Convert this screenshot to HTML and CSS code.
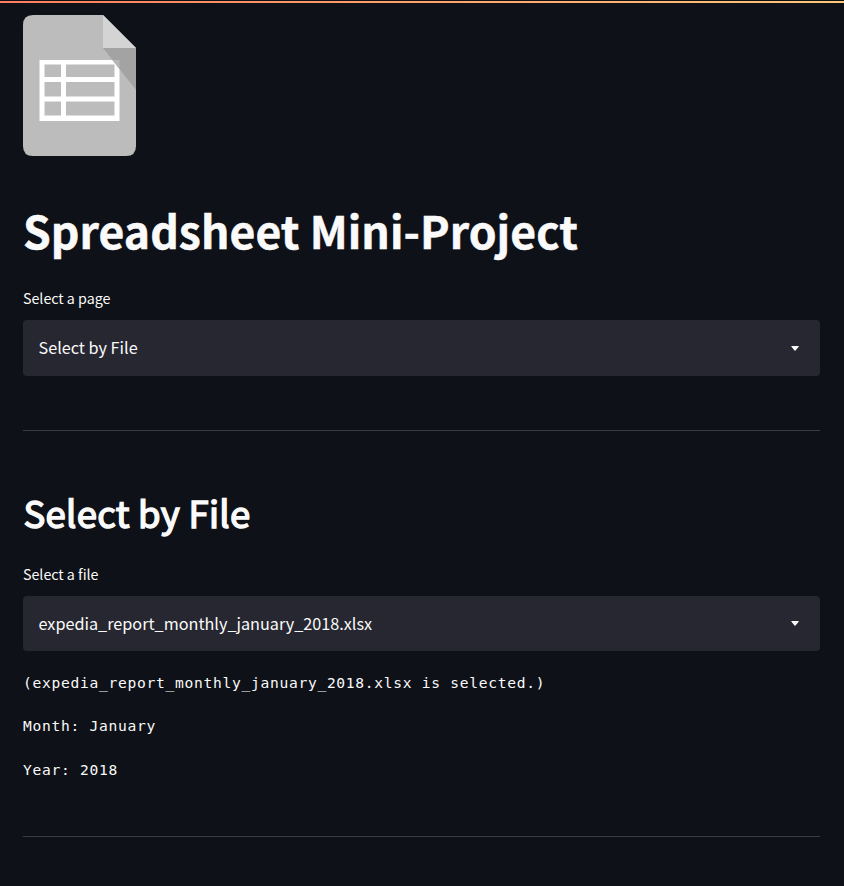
FILE: index.html
```html
<!DOCTYPE html>
<html lang="en">
<head>
<meta charset="utf-8">
<title>Spreadsheet Mini-Project</title>
<link rel="stylesheet" href="styles.css">
</head>
<body>
<div class="decoration"></div>
<main class="page">
  <svg class="logo" width="113" height="141" viewBox="0 0 113 141" aria-hidden="true">
    <path fill="#bcbcbc" d="M10 0H80L113 33V131Q113 141 103 141H10Q0 141 0 131V10Q0 0 10 0Z"/>
    <path fill="#fff" fill-rule="evenodd" d="M16.500 45H96.500V106H16.500ZM21.500 49.500V62H38V49.500ZM43 49.500V62H91.500V49.500ZM21.500 67V81.500H38V67ZM43 67V81.500H91.500V67ZM21.500 86.500V100.500H38V86.500ZM43 86.500V100.500H91.500V86.500Z"/>
    <path fill="#d5d4d5" d="M80 0L113 33H80Z"/>
    <path fill="#a3a3a3" d="M80 33H113V75Z"/>
    <path fill="#b5b5b5" d="M89.500 45H96.500V54Z"/>
  </svg>
  <h1 class="title">Spreadsheet Mini-Project</h1>
  <div class="field">
    <div class="label">Select a page</div>
    <div class="select">
      <span class="value">Select by File</span>
      <svg class="caret" width="8" height="5" viewBox="0 0 8 5"><path d="M.3.5Q0 .2.6 0H7.400Q8 .2 7.700.8L4.500 4.500Q4 5 3.500 4.500Z"/></svg>
    </div>
  </div>
  <hr class="rule">
  <h2 class="heading">Select by File</h2>
  <div class="field">
    <div class="label">Select a file</div>
    <div class="select select-file">
      <span class="value">expedia_report_monthly_january_2018.xlsx</span>
      <svg class="caret" width="8" height="5" viewBox="0 0 8 5"><path d="M.3.5Q0 .2.6 0H7.400Q8 .2 7.700.8L4.500 4.500Q4 5 3.500 4.500Z"/></svg>
    </div>
  </div>
  <div class="output">
    <div class="line">(expedia_report_monthly_january_2018.xlsx is selected.)</div>
    <div class="line">Month: January</div>
    <div class="line">Year: 2018</div>
  </div>
  <hr class="rule rule-end">
</main>
</body>
</html>
```
FILE: styles.css
```css
* { box-sizing: border-box; }
body {
  margin: 0;
  height: 886px;
  overflow: hidden;
  background: #0e1117;
  color: #fafafa;
  font-family: "Noto Sans CJK JP", "Noto Sans", sans-serif;
}
.decoration {
  height: 2px;
  margin-top: 1px;
  background: linear-gradient(90deg, #ff7d5d, #ffc878);
}
.page { padding: 12px 24px 0 23px; }
.logo { display: block; }
.title {
  margin: 44px 0 0;
  height: 60px;
  font-size: 44.500px;
  line-height: 60px;
  font-weight: 700;
  letter-spacing: .06px;
  -webkit-text-stroke: .5px #fafafa;
  white-space: nowrap;
}
.label {
  height: 24px;
  margin: 26px 0 10px;
  font-size: 14.300px;
  line-height: 24px;
  letter-spacing: -.040px;
}
.select {
  display: flex;
  align-items: center;
  justify-content: space-between;
  height: 56px;
  padding: 0 21px 0 15.500px;
  border-radius: 4px;
  background: #262730;
  font-size: 16.230px;
}
.value { line-height: 24px; margin-bottom: 2px; }
.select-file { height: 55px; }
.select-file .value { margin-bottom: 1px; }
.caret { fill: #fafafa; margin-top: 1px; }
.select-file .caret { margin-top: 0; }
.rule {
  height: 1px;
  margin: 54px 0 0;
  border: 0;
  background: #3b3c3f;
}
.heading {
  height: 56px;
  margin: 54px 0 0;
  font-size: 36.500px;
  line-height: 56px;
  font-weight: 400;
  letter-spacing: .27px;
  text-indent: .5px;
  -webkit-text-stroke: 1.500px #fafafa;
  white-space: nowrap;
}
.heading + .field .label { margin: 21px 0 10px; }
.output {
  display: grid;
  row-gap: 19.500px;
  padding-top: 19.900px;
  font-family: "DejaVu Sans Mono", monospace;
  font-size: 14.600px;
  letter-spacing: .71px;
}
.line { line-height: 24px; white-space: pre; }
.rule-end { margin-top: 54px; }
```
